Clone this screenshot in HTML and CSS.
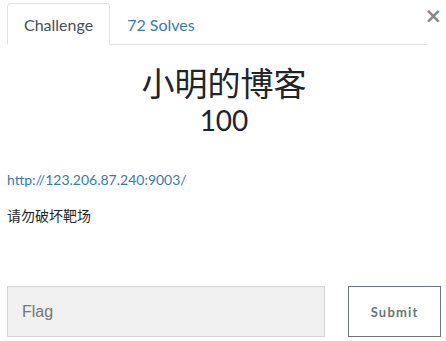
FILE: index.html
```html
<!DOCTYPE html>
<html>
<head>
<meta charset="utf-8">
<link rel="stylesheet" href="styles.css">
</head>
<body>
<div class="modal">
  <button class="close" aria-label="Close">×</button>
  <div class="tabs">
    <div class="tab active">Challenge</div>
    <div class="tab link">72 Solves</div>
  </div>
  <h2 class="title">小明的博客</h2>
  <h3 class="value">100</h3>
  <div class="desc">
    <p><a class="url" href="#">http://123.206.87.240:9003/</a></p>
    <p class="note">请勿破坏靶场</p>
  </div>
  <div class="submit-row">
    <div class="flag">Flag</div>
    <div class="btn">Submit</div>
  </div>
</div>
</body>
</html>
```
FILE: styles.css
```css
html, body {
  margin: 0;
  padding: 0;
  background: #fff;
}
.modal {
  position: relative;
  width: 446px;
  height: 341px;
  box-sizing: border-box;
  padding: 3px 5px 0 7px;
  font-family: Lato, "Noto Sans CJK SC", sans-serif;
  color: #212529;
  display: flex;
  flex-direction: column;
}
.close {
  position: absolute;
  top: 6px;
  right: 4px;
  border: 0;
  background: none;
  padding: 0;
  font-family: "DejaVu Sans", sans-serif;
  font-size: 21px;
  font-weight: bold;
  color: #8a8a8a;
  line-height: 1;
}
.tabs {
  display: flex;
  margin-right: 14px;
  border-bottom: 1px solid #dee2e6;
  height: 41px;
}
.tab {
  display: flex;
  align-items: center;
  padding: 0 16px;
  font-size: 16px;
  border: 1px solid transparent;
  border-radius: 4px 4px 0 0;
  margin-bottom: -1px;
}
.tab.active {
  border-color: #dee2e6 #dee2e6 #fff;
  color: #495057;
}
.tab.link {
  color: #337ab7;
  padding-left: 16px;
}
.title {
  margin: 19px 0 0;
  text-align: center;
  font-family: "Noto Sans CJK SC", sans-serif;
  font-weight: 400;
  font-size: 33px;
  line-height: 36px;
}
.value {
  margin: 4px 0 0;
  text-align: center;
  font-weight: 400;
  font-size: 28px;
  line-height: 32px;
}
.desc {
  margin-top: 35px;
  font-size: 14px;
}
.desc p {
  margin: 0 0 19px;
  line-height: 17px;
}
.url {
  color: #337ab7;
  text-decoration: none;
}
.note {
  font-family: "Noto Sans CJK SC", sans-serif;
  font-size: 14px;
}
.submit-row {
  margin-top: auto;
  margin-bottom: 4px;
  display: flex;
  gap: 23px;
}
.flag {
  width: 319px;
  height: 51px;
  box-sizing: border-box;
  background: #f0f0f0;
  border: 1px solid #d4d4d4;
  font-family: "Liberation Sans", sans-serif;
  font-size: 16px;
  color: #777;
  padding-left: 14px;
  display: flex;
  align-items: center;
}
.btn {
  width: 93px;
  height: 51px;
  box-sizing: border-box;
  border: 1px solid #6c757d;
  font-size: 13px;
  font-weight: bold;
  color: #6c757d;
  letter-spacing: 1.2px;
  display: flex;
  align-items: center;
  justify-content: center;
}
```
